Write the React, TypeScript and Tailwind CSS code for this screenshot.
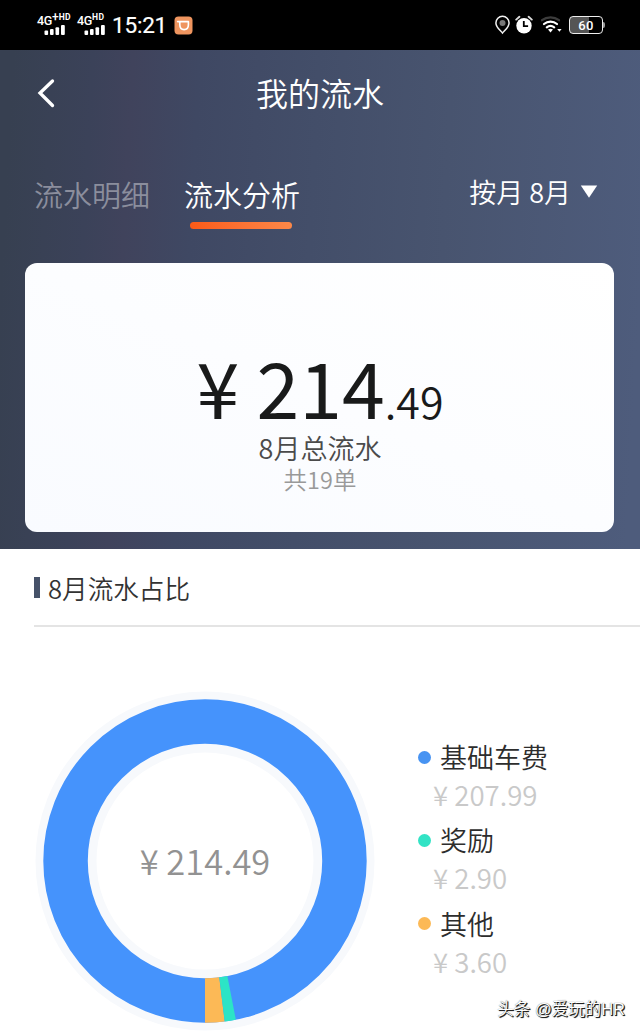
const CENTER = 170;
const OUTER = 161.7;
const INNER = 117.2;

const entries = [
  { label: "基础车费", amount: "¥ 207.99", dot: "bg-[#4793f2]" },
  { label: "奖励", amount: "¥ 2.90", dot: "bg-[#32e3c5]" },
  { label: "其他", amount: "¥ 3.60", dot: "bg-[#fcb956]" },
];

// Angles are in degrees, counter-clockwise from the bottom of the ring.
function slice(from: number, to: number) {
  const point = (r: number, deg: number) => {
    const a = (deg * Math.PI) / 180;
    return `${CENTER + r * Math.sin(a)} ${CENTER + r * Math.cos(a)}`;
  };
  return `M${point(OUTER, from)}A${OUTER} ${OUTER} 0 0 0 ${point(OUTER, to)}L${point(INNER, to)}A${INNER} ${INNER} 0 0 1 ${point(INNER, from)}Z`;
}

function Signal({ label, plus }: { label: string; plus?: boolean }) {
  return (
    <div className={plus ? "w-[40px]" : "w-[33px]"}>
      <div className="flex h-[11px] items-start whitespace-nowrap font-['Roboto',sans-serif] font-medium leading-[11px]">
        <span className="text-[12.5px] tracking-[-0.3px]">{label}</span>
        {plus && <span className="-mt-[3px] text-[12px]">+</span>}
        <span className="-mt-[3px] text-[8.5px] font-bold tracking-[0.4px]">HD</span>
      </div>
      <svg width="22" height="10" viewBox="0 0 22 10" className="ml-[7px] -mt-px" fill="#fff">
        <rect x="0.5" y="5.5" width="3.6" height="4.5" rx="1" />
        <rect x="6" y="4" width="3.6" height="6" rx="1" />
        <rect x="11.5" y="2.2" width="3.6" height="7.8" rx="1" />
        <rect x="17" y="0" width="3.8" height="10" rx="1" />
      </svg>
    </div>
  );
}

function StatusBar() {
  return (
    <div className="flex h-[50px] items-center justify-between bg-black pl-[37px] pr-[35px] text-white">
      <div className="flex items-center">
        <Signal label="4G" plus />
        <Signal label="4G" />
        <span className="ml-[2px] w-[61px] font-['Roboto',sans-serif] text-[22.5px] font-normal leading-[50px] tracking-[-0.2px] [-webkit-text-stroke:0.2px_#fff]">15:21</span>
        <svg width="19" height="19" viewBox="0 0 19 19" className="ml-[1px]">
          <rect x="0.5" y="0.5" width="18" height="18" rx="4" fill="#ef955f" />
          <path d="M3.6 5.6H14.4V8.8C14.4 11.8 12.6 13.6 10.1 13.6 7.6 13.6 5.8 11.8 5.8 8.8V5.6" fill="none" stroke="#fff" strokeWidth="1.6" strokeLinejoin="round" strokeLinecap="round" />
        </svg>
      </div>
      <div className="flex items-center">
        <svg width="17" height="20" viewBox="0 0 17 20" fill="none">
          <path d="M8.5 1.3A6.6 6.6 0 0 0 1.9 7.9c0 4.2 4.2 7.3 6.6 10.1 2.4-2.8 6.6-5.9 6.6-10.1a6.6 6.6 0 0 0-6.6-6.6Z" stroke="#f2f2f2" strokeWidth="1.5" />
          <circle cx="8.5" cy="8" r="3" fill="#777" />
        </svg>
        <svg width="18" height="20" viewBox="0 0 18 20" className="ml-[4px]">
          <circle cx="9" cy="10.7" r="7.7" fill="#fff" />
          <path d="M1.2 4.6 4.4 1.8M16.8 4.6l-3.2-2.8" stroke="#ddd" strokeWidth="1.9" strokeLinecap="round" />
          <path d="M8.8 6v5.2h4.3" fill="none" stroke="#000" strokeWidth="1.8" />
        </svg>
        <svg width="24" height="20" viewBox="0 0 24 20" fill="none" strokeLinecap="round" className="ml-[7px]">
          <path d="M2 5.2a14 14 0 0 1 17 0" stroke="#3c3c3c" strokeWidth="2.3" />
          <path d="M4 9a10 10 0 0 1 13 0M6.8 12.4a6 6 0 0 1 7.4 0" stroke="#fff" strokeWidth="2.2" />
          <path d="M8 14.6q2.5-1.5 5 0L10.5 17.5Z" fill="#fff" />
          <path d="M17.2 14h4.4l-2.2 2.7Z" fill="#fff" />
        </svg>
        <div className="ml-[5px] flex h-[18px] w-[34px] items-center justify-center rounded-[4px] border-[1.5px] border-[#eee] bg-[linear-gradient(90deg,#555_60%,#000_60%)] font-['Roboto',sans-serif] text-[13px] font-medium leading-none tracking-[0.3px]">
          60
        </div>
        <div className="h-[6px] w-[2px] rounded-r-sm bg-[#999]" />
      </div>
    </div>
  );
}

export default function App() {
  return (
    <main className="relative flex h-[1031px] w-[640px] flex-col overflow-hidden bg-white font-['Noto_Sans_CJK_SC',sans-serif] font-[350]">
      <StatusBar />
      <header className="h-[499px] bg-[linear-gradient(93deg,#374051_2%,#3b4259_14%,#40435c_20%,#3f4863_30%,#434e69_48%,#48546f_68%,#4e5c7c_98%)] text-white">
        <div className="grid h-[85px] grid-cols-[1fr_auto_1fr] items-center">
          <svg width="20" height="30" viewBox="0 0 20 30" className="ml-[36px]" fill="none">
            <path d="M16.5 3 4 15 16.5 27.5" stroke="#fff" strokeWidth="3.3" strokeLinecap="round" strokeLinejoin="miter" />
          </svg>
          <h1 className="pb-[2px] text-[32px] leading-[48px]">我的流水</h1>
        </div>
        <div className="flex h-[128px] pl-[34px] pr-[42px] pt-[38px] text-[29px] leading-[42px]">
          <span className="text-[#8b8e9d]">流水明细</span>
          <div className="ml-[34px] flex flex-col">
            <span>流水分析</span>
            <span className="ml-[6px] mt-[7px] h-[7px] w-[102px] rounded-full bg-linear-to-r from-[#fb5a16] to-[#fc8848]" />
          </div>
          <div className="ml-auto flex h-[38px] items-center text-[27px]">
            按月 8月
            <svg width="18" height="13" viewBox="0 0 18 13" className="ml-[9px] -mt-[2px]">
              <path d="M0.8 0.5h16.4L9 12.7Z" fill="#fff" />
            </svg>
          </div>
        </div>
        <section className="ml-[25px] h-[269px] w-[589px] rounded-[12px] bg-linear-to-tr from-[#f9fbff] via-[#fcfdff] to-white pt-[82px] text-center">
          <div className="h-[83px] whitespace-nowrap pl-px text-[77px] font-normal leading-[82px] text-[#191a1a]">
            ¥ 214<span className="text-[43px] font-[350]">.49</span>
          </div>
          <div className="pl-px text-[27px] leading-[39px] text-[#4b4b4b]">8月总流水</div>
          <div className="pl-px text-[23.5px] leading-[24px] text-[#999]">共19单</div>
        </section>
      </header>
      <section className="pl-[34px]">
        <div className="flex h-[78px] items-center border-b-2 border-[#e4e4e4]">
          <span className="h-[21px] w-[6px] bg-[#465269]" />
          <h2 className="ml-[8px] pt-px text-[25.6px] leading-[38px] text-[#333]">8月流水占比</h2>
        </div>
        <div className="flex pt-[64px]">
          <svg width="342" height="340" viewBox="-1 0 342 340">
            <circle cx={CENTER} cy={CENTER} r={139} fill="none" stroke="#f7f9fc" strokeWidth={61} />
            <circle cx={CENTER} cy={CENTER} r={(OUTER + INNER) / 2} fill="none" stroke="#4593fc" strokeWidth={OUTER - INNER} />
            <path d={slice(0, 7)} fill="#fcb956" />
            <path d={slice(7, 11)} fill="#2ce4c6" />
            <text x={CENTER} y={184} textAnchor="middle" fontSize="34.5" fill="#929292">¥ 214.49</text>
          </svg>
          <ul className="ml-[42px] mt-[46px]">
            {entries.map((entry) => (
              <li key={entry.label} className="h-[83.4px]">
                <div className="flex items-center text-[27px] leading-[39px] text-[#2d2d2d]">
                  <span className={`mr-[9px] mt-px size-[13px] rounded-full ${entry.dot}`} />
                  {entry.label}
                </div>
                <div className="-mt-px pl-[15px] text-[27.6px] leading-[39px] text-[#c9c9c9]">{entry.amount}</div>
              </li>
            ))}
          </ul>
        </div>
      </section>
      <div className="absolute bottom-[10px] right-[15px] whitespace-nowrap font-['Liberation_Sans','Noto_Sans_CJK_SC',sans-serif] text-[16.5px] leading-[24px] text-white [text-shadow:1px_1px_0_#222,1px_1px_1px_#222,0_0_1px_#555]">
        头条 @爱玩的HR
      </div>
    </main>
  );
}
